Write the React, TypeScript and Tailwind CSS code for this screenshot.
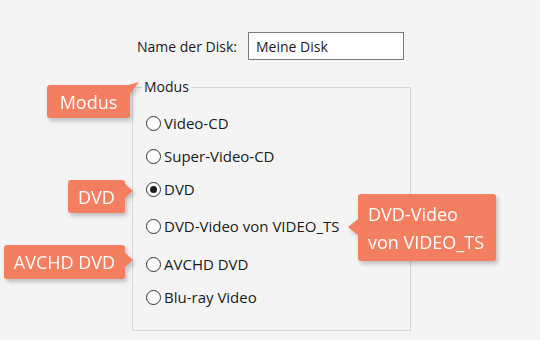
import type { ReactNode } from 'react';

const options = [
  { label: 'Video-CD', mt: 'mt-[27px]', checked: false },
  { label: 'Super-Video-CD', mt: 'mt-[17px]', checked: false },
  { label: 'DVD', mt: 'mt-[17px]', checked: true },
  { label: 'DVD-Video von VIDEO_TS', mt: 'mt-[21px]', checked: false },
  { label: 'AVCHD DVD', mt: 'mt-[22px]', checked: false },
  { label: 'Blu-ray Video', mt: 'mt-[17px]', checked: false },
];

function Radio({ checked }: { checked: boolean }) {
  return (
    <span className="w-[15px] h-[15px] rounded-full border border-[#333] bg-white flex items-center justify-center shrink-0">
      {checked && <span className="w-[7px] h-[7px] rounded-full bg-[#1e1e1e]" />}
    </span>
  );
}

// orange label with a small pointer, drawn over the dialog
function Callout({ box, children, pointer }: { box: string; children: ReactNode; pointer: ReactNode }) {
  return (
    <div className={`absolute drop-shadow-[2px_3px_2px_rgba(0,0,0,0.22)] ${box}`}>
      <div className="relative w-full h-full bg-[#f47e60] rounded-[3px] text-white text-[18px] leading-[30px] font-['Open_Sans',sans-serif] flex items-center justify-center">
        {children}
        {pointer}
      </div>
    </div>
  );
}

export default function App() {
  return (
    <div className="relative w-[540px] h-[340px] overflow-hidden bg-[#f4f4f4] text-[#1b1b1b] text-[14px] font-['Open_Sans',sans-serif]">
      <div className="flex items-center pt-[32px] pl-[137px]">
        <span>Name der Disk:</span>
        <div className="ml-[11px] w-[156px] h-[28px] border border-[#7a7a7a] bg-white flex items-center pl-[7px]">
          Meine Disk
        </div>
      </div>

      <div className="relative ml-[132px] mt-[27px] w-[279px] h-[244px] border border-[#d8d8d8]">
        <span className="absolute -top-[11px] left-[9px] px-[2px] bg-[#f4f4f4] leading-[20px]">Modus</span>
        <div className="flex flex-col pl-[13px]">
          {options.map(o => (
            <div key={o.label} className={`flex items-center gap-[3px] h-[16px] ${o.mt}`}>
              <Radio checked={o.checked} />
              <span className="leading-[16px] text-[15px]">{o.label}</span>
            </div>
          ))}
        </div>
      </div>

      <Callout
        box="left-[47px] top-[85px] w-[83px] h-[33px]"
        pointer={
          <svg className="absolute -right-[10px] -top-[3px]" width="12" height="16" viewBox="0 0 12 16">
            <path d="M0 3 L11 0 L0 14 Z" fill="#f47e60" />
          </svg>
        }
      >
        Modus
      </Callout>

      <Callout
        box="left-[68px] top-[180px] w-[57px] h-[33px]"
        pointer={
          <svg className="absolute -right-[9px] top-[3px]" width="10" height="16" viewBox="0 0 10 16">
            <path d="M0 0 L9 8 L0 16 Z" fill="#f47e60" />
          </svg>
        }
      >
        DVD
      </Callout>

      <Callout
        box="left-[4px] top-[245px] w-[121px] h-[34px]"
        pointer={
          <svg className="absolute -right-[9px] top-[7px]" width="10" height="16" viewBox="0 0 10 16">
            <path d="M0 0 L9 8 L0 16 Z" fill="#f47e60" />
          </svg>
        }
      >
        AVCHD DVD
      </Callout>

      <Callout
        box="left-[358px] top-[194px] w-[138px] h-[67px]"
        pointer={
          <svg className="absolute -left-[10px] top-[25px]" width="10" height="16" viewBox="0 0 10 16">
            <path d="M10 0 L0 8 L10 16 Z" fill="#f47e60" />
          </svg>
        }
      >
        <span className="block pl-[10px] w-full text-left leading-[28px]">
          DVD-Video
          <br />
          von VIDEO_TS
        </span>
      </Callout>
    </div>
  );
}
